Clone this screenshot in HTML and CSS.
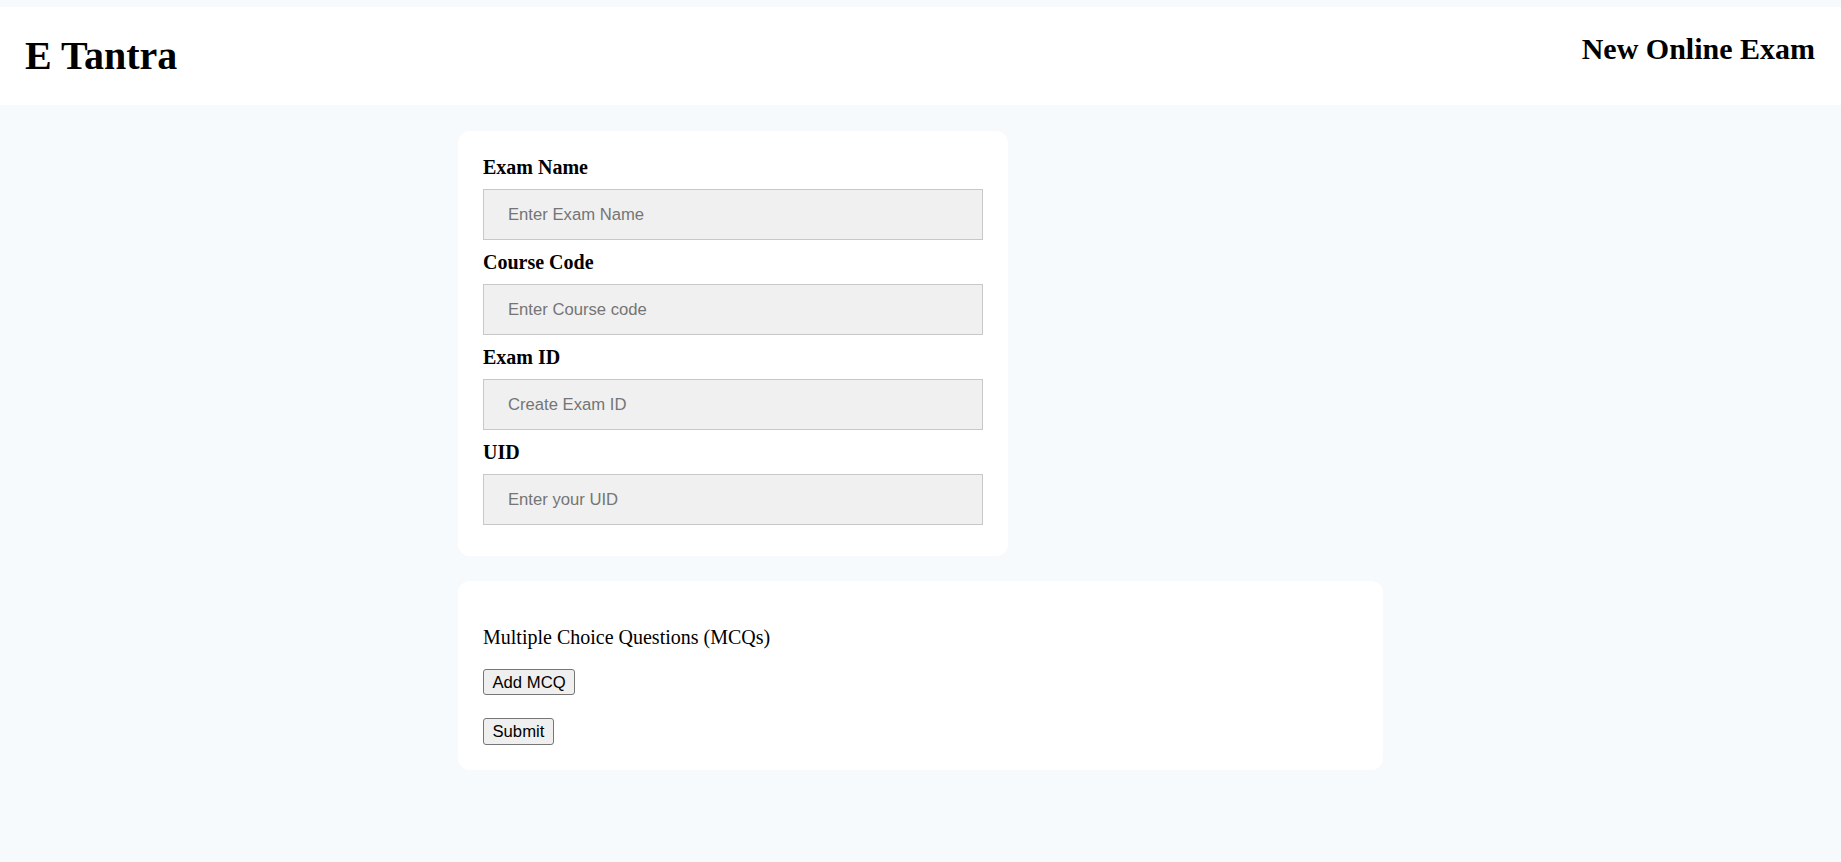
FILE: index.html
```html
<!DOCTYPE html>
<html lang="en">
<head>
<meta charset="utf-8">
<title>E Tantra - New Online Exam</title>
<link rel="stylesheet" href="styles.css">
</head>
<body>
<header class="topbar">
  <h1 class="brand">E Tantra</h1>
  <h2 class="page-title">New Online Exam</h2>
</header>
<main class="container">
  <section class="card details">
    <label class="field-label" for="examName">Exam Name</label>
    <input class="field-input" id="examName" type="text" placeholder="Enter Exam Name">
    <label class="field-label" for="courseCode">Course Code</label>
    <input class="field-input" id="courseCode" type="text" placeholder="Enter Course code">
    <label class="field-label" for="examId">Exam ID</label>
    <input class="field-input" id="examId" type="text" placeholder="Create Exam ID">
    <label class="field-label" for="uid">UID</label>
    <input class="field-input" id="uid" type="text" placeholder="Enter your UID">
  </section>
  <section class="card mcqs">
    <p class="mcq-title">Multiple Choice Questions (MCQs)</p>
    <button class="btn" type="button">Add MCQ</button>
    <button class="btn submit" type="button">Submit</button>
  </section>
</main>
</body>
</html>
```

FILE: styles.css
```css
html, body {
  margin: 0;
  padding: 0;
}

body {
  background: #f7fafd;
  font-family: "Liberation Serif", "Times New Roman", serif;
  color: #000;
  min-height: 862px;
}

.topbar {
  margin-top: 7px;
  background: #ffffff;
  display: flex;
  justify-content: space-between;
  padding: 0 26px 0 25px;
}

.brand {
  font-size: 40px;
  font-weight: bold;
  line-height: 44px;
  margin: 27px 0;
}

.page-title {
  font-size: 30px;
  font-weight: bold;
  line-height: 33px;
  margin: 25px 0;
}

.container {
  width: 925px;
  margin: 26px auto 0;
  display: flex;
  flex-direction: column;
  align-items: flex-start;
  gap: 25px;
}

.card {
  background: #ffffff;
  border-radius: 12px;
  box-sizing: border-box;
}

.details {
  width: 550px;
  padding: 25px 25px 20px;
  display: flex;
  flex-direction: column;
}

.field-label {
  display: block;
  font-size: 20px;
  font-weight: bold;
  line-height: 23px;
  margin-bottom: 10px;
}

.field-input {
  box-sizing: border-box;
  width: 500px;
  height: 51px;
  margin: 0 0 11px;
  padding: 0 24px;
  border: 1px solid #c8c8c8;
  background: #f0f0f0;
  font-family: "Liberation Sans", Arial, sans-serif;
  font-size: 16.67px;
  color: #000;
  outline: none;
}

.field-input::placeholder {
  color: #757575;
}

.mcqs {
  width: 925px;
  padding: 25px 25px 25px;
  display: flex;
  flex-direction: column;
  align-items: flex-start;
}

.mcq-title {
  font-size: 20px;
  line-height: 23px;
  margin: 20px 0;
}

.btn {
  box-sizing: border-box;
  font-family: "Liberation Sans", Arial, sans-serif;
  font-size: 16.67px;
  line-height: 19px;
  height: 26px;
  padding: 0 8.5px;
  border: 1px solid #767676;
  border-radius: 3px;
  background: #efefef;
  color: #000;
}

.submit {
  margin-top: 23px;
  height: 27px;
}
```
